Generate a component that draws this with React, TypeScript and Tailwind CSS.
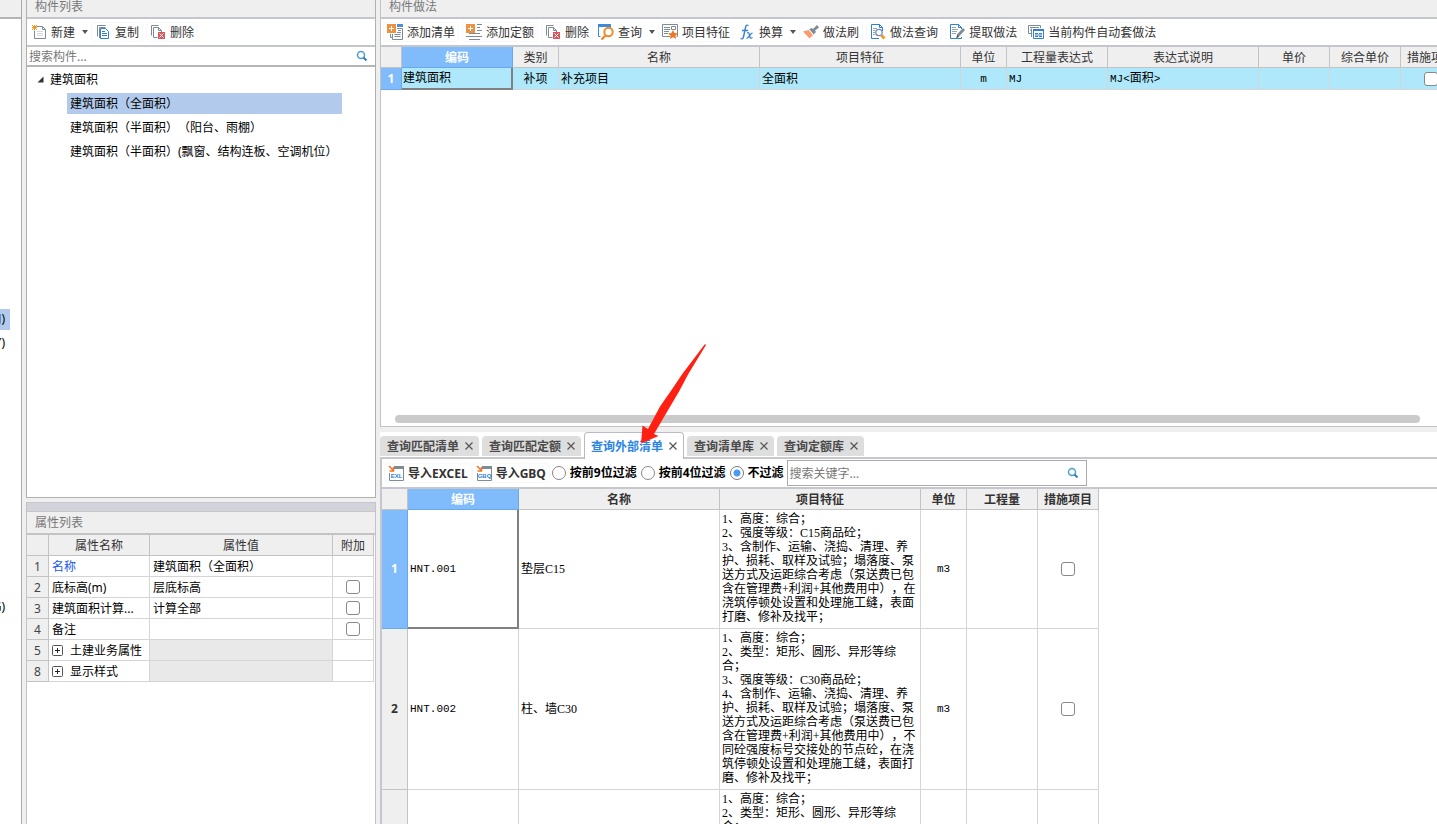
import type { ReactNode } from 'react';
import clsx from 'clsx';

/* ---------- icons ---------- */

function Icon({ children }: { children: ReactNode }) {
  return (
    <svg width="16" height="16" viewBox="0 0 16 16" fill="none" className="shrink-0" aria-hidden="true">
      {children}
    </svg>
  );
}

const NewIcon = () => (
  <Icon>
    <path d="M5.5 2.5h6l3 3v9h-11v-8" stroke="#7d8b94" />
    <path d="M11.5 2.5v3h3" stroke="#7d8b94" />
    <path d="M6 7.5h6M6 9.5h6M6 11.5h6" stroke="#d3d7da" />
    <path d="M1 1h1v1H1zM3 1h1v1H3zM5 1h1v1H5zM2 2h3v1H2zM1 3h5v1H1zM2 4h3v1H2zM1 5h1v1H1zM3 5h1v1H3zM5 5h1v1H5z" fill="#f29a1f" />
  </Icon>
);

const CopyIcon = () => (
  <Icon>
    <path d="M2.5 12.5v-11h8M4.5 14V3.5h6" stroke="#7d8b94" />
    <path d="M5.5 4.5h5l3 3v7h-8z" fill="#fff" stroke="#2f7fd6" />
    <path d="M7 7.5h3M7 9.5h5M7 11.5h5" stroke="#2f7fd6" />
  </Icon>
);

const DeleteIcon = () => (
  <Icon>
    <path d="M1.5 11.5v-10h7M3.5 13.5v-10h5l3 3v1.5M3.5 13.500h4" stroke="#7d8b94" />
    <path d="M8.5 3.5v3h3" stroke="#7d8b94" />
    <path d="M8 8h7v7H8z" fill="#d9575c" />
    <path d="M9.5 9.5l4 4M13.5 9.5l-4 4" stroke="#fff" />
  </Icon>
);

const AddListIcon = () => (
  <Icon>
    <path d="M10 0h6v3h-6z" fill="#4a90d9" />
    <path d="M10 4.5h5.500v11h-10V10M3.5 10v3.5h2" stroke="#7d8b94" />
    <path d="M11 6.5h3M10 8.5h4M7.5 10.5h6M7.5 12.5h6" stroke="#7d8b94" />
    <path d="M0 0h9v9H0z" fill="#ee9140" />
    <path d="M4.5 2v5M2 4.5h5" stroke="#fff" />
  </Icon>
);

const AddQuotaIcon = () => (
  <Icon>
    <path d="M11 .5h5M11 3.5h3M11 6.5h5M3 9.5h11M0 12.5h16M3 15.5h11" stroke="#7d8b94" />
    <path d="M0 0h9v9H0z" fill="#ee9140" />
    <path d="M4.5 2v5M2 4.5h5" stroke="#fff" />
  </Icon>
);

const QueryIcon = () => (
  <Icon>
    <path d="M0 0h13v3H0z" fill="#3f8ad8" />
    <path d="M.5 3v9.5h2M12.5 3v1" stroke="#3f8ad8" />
    <circle cx="10.5" cy="8" r="4.200" fill="#fff" stroke="#f08a2c" strokeWidth="2" />
    <path d="M7.5 11.5L3.5 15.5" stroke="#f08a2c" strokeWidth="2.400" />
  </Icon>
);

const FeatureIcon = () => (
  <Icon>
    <path d="M8 12.5H.5v-12h15v12h-1" stroke="#7d8b94" />
    <path d="M2 3.5h6M2 5.5h6M2 7.5h5M2 9.5h4M9.5 2.5h4v3h-4z" stroke="#7d8b94" />
    <path d="M11 6l1.500 3 3.500.4-2.600 2.300.7 3.300-3.100-1.700L7.900 15l.7-3.300L6 9.400 9.500 9z" fill="#ee7624" />
  </Icon>
);

const FxIcon = () => (
  <Icon>
    <path d="M9.5 1.500C7.500.3 6.800 2 6.400 4L4.600 12.500C4.200 14.700 3 15.300 1.500 14.500M3 6.500h6" stroke="#3a80d2" strokeWidth="1.400" />
    <path d="M8 9c2-1 2 0 2.500 2.500S11.500 15 13.500 13.500M13.500 8.800c-2 0-3.500 5.500-6 5.500" stroke="#3a80d2" strokeWidth="1.300" />
  </Icon>
);

const BrushIcon = () => (
  <Icon>
    <path d="M14 1l2 2.500-4 3 1 1.500-2.500 2.500L6 5.500 8.500 4 10 5z" fill="#7d8b94" />
    <path d="M5.500 6l4.500 5-3.500 3.500L0 7.500z" fill="#fb9a6c" />
    <path d="M6 5.500l4.500 5.200" stroke="#fff" />
  </Icon>
);

const MethodQueryIcon = () => (
  <Icon>
    <path d="M9 14.500H1.500V.5h8l3 3V7" stroke="#2f7fd6" />
    <path d="M9.500.5v3h3" stroke="#2f7fd6" />
    <path d="M3 4.500h4M3 6.500h2M3 8.500h2M3 10.500h2" stroke="#9aa5ac" />
    <circle cx="9" cy="8.500" r="3.200" fill="#fff" stroke="#6b8fc4" strokeWidth="1.300" />
    <path d="M11.500 11.500l3 3" stroke="#f29a1f" strokeWidth="3" />
  </Icon>
);

const ExtractIcon = () => (
  <Icon>
    <path d="M12.500 5V3.500l-3-3h-8v14h11V13" stroke="#2f7fd6" />
    <path d="M9.500.5v3h3" stroke="#2f7fd6" />
    <path d="M3 3.500h4M3 5.500h6M3 7.500h5M3 9.500h4" stroke="#9aa5ac" />
    <path d="M15 5l-6.500 7" stroke="#7d8b94" strokeWidth="2.800" />
    <path d="M8.500 11l-1.500 3 3-1" fill="#444" />
  </Icon>
);

const AutoIcon = () => (
  <Icon>
    <path d="M3 9.500H.5v-8h12V4M3.500 13V4.500" stroke="#7d8b94" />
    <path d="M2 3.500h9M2 6h1" stroke="#7d8b94" />
    <path d="M5.500 5.500h10v9h-10z" fill="#fff" stroke="#2f7fd6" />
    <path d="M5 5h11v2H5z" fill="#2f7fd6" />
    <path d="M7 9.500h3M11 9.500h3M7 12.500h3M11 12.500h3M7 11h7" stroke="#2f7fd6" />
  </Icon>
);

function ImportIcon({ label }: { label: string }) {
  return (
    <Icon>
      <path d="M6 1h10v3H6z" fill="#7d8b94" />
      <path d="M15.500 3v12.500H1.500V8" stroke="#7d8b94" />
      <path d="M1 1l4.500 4.500M5.500 2v4h-4" stroke="#ee7624" strokeWidth="1.500" />
      <text x="8.500" y="13" textAnchor="middle" fontSize="6" fontWeight="700" fontFamily="Liberation Sans, sans-serif" fill="#2f7fd6">
        {label}
      </text>
    </Icon>
  );
}

const SearchIcon = () => (
  <svg width="12" height="12" viewBox="0 0 12 12" fill="none" aria-hidden="true">
    <circle cx="5" cy="5" r="3.500" stroke="#4a9fd0" strokeWidth="1.500" />
    <path d="M7.500 7.500L10.500 10.500" stroke="#2f80b5" strokeWidth="2" />
  </svg>
);

const ExpandIcon = () => (
  <svg width="11" height="11" viewBox="0 0 11 11" fill="none" className="shrink-0" aria-hidden="true">
    <rect x=".5" y=".5" width="10" height="10" rx="1" stroke="#555" />
    <path d="M3 5.500h5M5.500 3v5" stroke="#222" />
  </svg>
);

/* ---------- shared controls ---------- */

function ToolButton({ icon, label, dropdown, bold }: { icon: ReactNode; label: string; dropdown?: boolean; bold?: boolean }) {
  return (
    <button
      type="button"
      className={clsx(
        'flex h-5 shrink-0 items-center gap-1 rounded whitespace-nowrap text-[#333]',
        dropdown ? 'pl-0.5' : 'border border-[#f8f8f8] px-[3px]',
        bold && 'font-bold',
      )}
    >
      {icon}
      <span className="pt-0.5">{label}</span>
      {dropdown && (
        <svg width="9" height="4" viewBox="0 0 9 4" aria-hidden="true">
          <path d="M3 0h6L6 4z" fill="#555" />
        </svg>
      )}
    </button>
  );
}

function Check({ label }: { label: string }) {
  return (
    <input
      type="checkbox"
      aria-label={label}
      className="mx-auto block size-[14px] appearance-none rounded-[3px] border border-[#888] bg-white"
    />
  );
}

function PanelTitle({ children }: { children: ReactNode }) {
  return (
    <h2 className="h-[19px] shrink-0 border-b-2 border-[#c3c6ca] bg-[#efefef] pl-2 leading-[14px] text-[#777]">{children}</h2>
  );
}

const head = 'h-[21px] border-r border-b border-[#c3c3c3] bg-[#efefef] px-0 pt-0.5 pb-0 text-center text-[#333]';
const headActive = 'h-[21px] border-r border-b border-[#6aa8ea] bg-[#80bbfb] px-0 pt-0.5 pb-0 text-center font-bold text-white';
const cell = 'border-r border-b border-[#d5d5d5] px-0.5 py-0';
const cellWide = 'border-r border-b border-[#d5d5d5] px-[3px] py-0';
const mono = "font-['Liberation_Mono','Noto_Sans_CJK_SC',monospace] text-[11px]";
const song = "font-['Liberation_Serif','Noto_Sans_CJK_SC',serif]";

/* ---------- component list ---------- */

const components = ['建筑面积（全面积）', '建筑面积（半面积）（阳台、雨棚）', '建筑面积（半面积）(飘窗、结构连板、空调机位）'];

function ComponentList() {
  return (
    <section className="flex min-h-0 flex-1 flex-col border-x border-b border-[#b0b0b0] bg-white">
      <PanelTitle>构件列表</PanelTitle>
      <div className="flex h-7 shrink-0 items-center gap-[3px] border-b-2 border-[#c3c6ca] pl-0.5">
        <ToolButton icon={<NewIcon />} label="新建" dropdown />
        <ToolButton icon={<CopyIcon />} label="复制" />
        <ToolButton icon={<DeleteIcon />} label="删除" />
      </div>
      <label className="flex h-5 shrink-0 items-center border-b-2 border-[#b5b5b5] pr-[7px] pl-0.5">
        <input type="text" aria-label="搜索构件" placeholder="搜索构件..." className="min-w-0 flex-1 pt-0.5 outline-none placeholder:text-[#777]" />
        <SearchIcon />
      </label>
      <ul>
        <li>
          <div className="flex h-6 items-center gap-1.5 pl-[10px] text-black">
            <svg width="7" height="7" viewBox="0 0 7 7" aria-hidden="true">
              <path d="M6.500 .5v6h-6z" fill="#333" />
            </svg>
            <span className="pt-0.5">建筑面积</span>
          </div>
          <ul>
            {components.map((name, i) => (
              <li key={name} className="flex h-6 items-center pr-[33px] pl-10">
                <span className={clsx('h-[21px] flex-1 pl-[3px] leading-[21px] whitespace-nowrap text-black', i === 0 && 'bg-[#b2cbec]')}>
                  {name}
                </span>
              </li>
            ))}
          </ul>
        </li>
      </ul>
    </section>
  );
}

/* ---------- property list ---------- */

const properties = [
  { no: 1, name: '名称', value: '建筑面积（全面积）', link: true },
  { no: 2, name: '底标高(m)', value: '层底标高', check: true },
  { no: 3, name: '建筑面积计算...', value: '计算全部', check: true },
  { no: 4, name: '备注', value: '', check: true },
  { no: 5, name: '土建业务属性', group: true },
  { no: 8, name: '显示样式', group: true },
];

function PropertyList() {
  return (
    <section className="mt-1 flex h-[322px] shrink-0 flex-col border-x border-[#c3c3c3] bg-white">
      <div className="h-[10px] shrink-0 border-y border-[#c6c7cc] bg-[#d3d4db]" />
      <h2 className="h-[23px] shrink-0 border-b-2 border-[#c3c3c3] bg-[#efefef] pl-2 leading-[21px] text-[#777]">属性列表</h2>
      <table className="w-0 table-fixed border-separate border-spacing-0">
        <thead>
          <tr>
            <th className={clsx(head, 'w-[22px]')} />
            <th className={clsx(head, 'w-[101px] font-normal')}>属性名称</th>
            <th className={clsx(head, 'w-[183px] font-normal')}>属性值</th>
            <th className={clsx(head, 'w-[41px] font-normal')}>附加</th>
          </tr>
        </thead>
        <tbody>
          {properties.map((p) => (
            <tr key={p.no} className="h-[21px] whitespace-nowrap text-black">
              <td className="border-r border-b border-[#c3c3c3] bg-[#efefef] px-0 pt-0.5 pb-0 text-center text-[#444]">{p.no}</td>
              <td className={clsx(cellWide, p.link && 'text-[#1557f0]')}>
                {p.group ? (
                  <button type="button" className="flex items-center gap-[7px]">
                    <ExpandIcon />
                    <span className="pt-0.5">{p.name}</span>
                  </button>
                ) : (
                  <div className="pt-0.5">{p.name}</div>
                )}
              </td>
              <td className={clsx(cellWide, p.group && 'bg-[#e9e9e9]')}>
                <div className="pt-0.5">{p.value}</div>
              </td>
              <td className={cell}>{p.check && <Check label={p.name} />}</td>
            </tr>
          ))}
        </tbody>
      </table>
    </section>
  );
}

/* ---------- method table ---------- */

function MethodPanel() {
  return (
    <section className="flex min-h-0 flex-1 flex-col overflow-hidden border-b border-l border-[#c3c3c3] bg-white">
      <PanelTitle>构件做法</PanelTitle>
      <div className="flex h-7 shrink-0 items-center gap-[3px] border-b-2 border-[#c3c6ca] pl-0.5">
        <ToolButton icon={<AddListIcon />} label="添加清单" />
        <ToolButton icon={<AddQuotaIcon />} label="添加定额" />
        <ToolButton icon={<DeleteIcon />} label="删除" />
        <ToolButton icon={<QueryIcon />} label="查询" dropdown />
        <ToolButton icon={<FeatureIcon />} label="项目特征" />
        <ToolButton icon={<FxIcon />} label="换算" dropdown />
        <ToolButton icon={<BrushIcon />} label="做法刷" />
        <ToolButton icon={<MethodQueryIcon />} label="做法查询" />
        <ToolButton icon={<ExtractIcon />} label="提取做法" />
        <ToolButton icon={<AutoIcon />} label="当前构件自动套做法" />
      </div>
      <div className="min-h-0 flex-1 overflow-hidden">
        <table className="w-0 table-fixed border-separate border-spacing-0 whitespace-nowrap">
          <thead>
            <tr>
              <th className={clsx(head, 'w-[21px]')} />
              <th className={clsx(headActive, 'w-[111px]')}>编码</th>
              <th className={clsx(head, 'w-[46px] font-normal')}>类别</th>
              <th className={clsx(head, 'w-[201px] font-normal')}>名称</th>
              <th className={clsx(head, 'w-[201px] font-normal')}>项目特征</th>
              <th className={clsx(head, 'w-[46px] font-normal')}>单位</th>
              <th className={clsx(head, 'w-[101px] font-normal')}>工程量表达式</th>
              <th className={clsx(head, 'w-[151px] font-normal')}>表达式说明</th>
              <th className={clsx(head, 'w-[71px] font-normal')}>单价</th>
              <th className={clsx(head, 'w-[71px] font-normal')}>综合单价</th>
              <th className={clsx(head, 'w-[61px] font-normal')}>措施项目</th>
            </tr>
          </thead>
          <tbody>
            <tr className={clsx('h-[22px] bg-[#aee8fa] text-black', song)}>
              <td className="border-r border-b border-[#6aa8ea] bg-[#80bbfb] p-0 text-center font-['Noto_Sans',sans-serif] font-bold text-white">1</td>
              <td className="border-r-2 border-b-2 border-[#808080] px-px py-0">建筑面积</td>
              <td className={clsx(cell, 'text-center')}>补项</td>
              <td className={cell}>补充项目</td>
              <td className={cell}>全面积</td>
              <td className={clsx(cell, mono, 'text-center')}>m</td>
              <td className={clsx(cell, mono)}>MJ</td>
              <td className={cell}>
                <span className={mono}>MJ&lt;</span>面积<span className={mono}>&gt;</span>
              </td>
              <td className={cell} />
              <td className={cell} />
              <td className={cell}>
                <Check label="措施项目" />
              </td>
            </tr>
          </tbody>
        </table>
      </div>
      <div className="mr-[17px] mb-[3px] ml-[14px] h-2 shrink-0 rounded-full bg-[#cacaca]" />
    </section>
  );
}

/* ---------- query dock ---------- */

const tabs = ['查询匹配清单', '查询匹配定额', '查询外部清单', '查询清单库', '查询定额库'];
const filters = ['按前9位过滤', '按前4位过滤', '不过滤'];

const bills = [
  {
    no: 1,
    code: 'HNT.001',
    name: '垫层C15',
    unit: 'm3',
    feature: `1、高度：综合；
2、强度等级：C15商品砼；
3、含制作、运输、浇捣、清理、养
护、损耗、取样及试验；塌落度、泵
送方式及运距综合考虑（泵送费已包
含在管理费+利润+其他费用中），在
浇筑停顿处设置和处理施工缝，表面
打磨、修补及找平；`,
  },
  {
    no: 2,
    code: 'HNT.002',
    name: '柱、墙C30',
    unit: 'm3',
    feature: `1、高度：综合；
2、类型：矩形、圆形、异形等综
合；
3、强度等级：C30商品砼；
4、含制作、运输、浇捣、清理、养
护、损耗、取样及试验；塌落度、泵
送方式及运距综合考虑（泵送费已包
含在管理费+利润+其他费用中），不
同砼强度标号交接处的节点砼，在浇
筑停顿处设置和处理施工缝，表面打
磨、修补及找平；`,
  },
  {
    no: 3,
    feature: `1、高度：综合；
2、类型：矩形、圆形、异形等综
合；`,
  },
];

function QueryDock() {
  return (
    <section className="mt-[5px] flex h-[392px] shrink-0 flex-col bg-white">
      <div role="tablist" className="flex h-[27px] shrink-0 items-end gap-[3px] border-b-2 border-[#c5c7cc]">
        {tabs.map((tab) => {
          const active = tab === '查询外部清单';
          return (
            <div
              key={tab}
              className={clsx(
                'flex shrink-0 items-center gap-1.5 rounded-t font-bold',
                active
                  ? '-mb-0.5 h-[27px] border border-b-0 border-[#b9bcc8] bg-white px-1.5 text-[#2b84e8]'
                  : 'mb-px h-5 bg-[#dedede] pr-1.5 pl-[7px] text-[#4a4a4a]',
              )}
            >
              <button type="button" role="tab" aria-selected={active} className="pt-0.5">
                {tab}
              </button>
              <button type="button" aria-label={`关闭${tab}`}>
                <svg width="8" height="8" viewBox="0 0 8 8" fill="none" aria-hidden="true">
                  <path d="M.5 .5l7 7M7.500 .5l-7 7" stroke="#555" strokeWidth="1.200" />
                </svg>
              </button>
            </div>
          );
        })}
      </div>
      <div className="flex min-h-0 flex-1 flex-col overflow-hidden border-l-2 border-[#c5c7cc]">
        <div className="flex h-[30px] shrink-0 items-center border-b-2 border-[#c5c7cc] pl-0.5">
          <ToolButton icon={<ImportIcon label="EXL" />} label="导入EXCEL" bold />
          <ToolButton icon={<ImportIcon label="GBQ" />} label="导入GBQ" bold />
          <div className="ml-0.5 flex items-center gap-1">
            {filters.map((f) => (
              <label key={f} className="flex items-center gap-1 font-bold whitespace-nowrap text-black">
                <input
                  type="radio"
                  name="filter"
                  defaultChecked={f === '不过滤'}
                  className="size-[14px] appearance-none rounded-full border border-[#888] bg-white checked:border-[#777] checked:bg-[radial-gradient(circle,#4a9af5_3px,#fff_4px)]"
                />
                {f}
              </label>
            ))}
          </div>
          <label className="ml-[3px] flex h-[26px] w-[300px] items-center border border-[#aaa] pr-[7px] pl-0.5">
            <input type="text" aria-label="搜索关键字" placeholder="搜索关键字..." className="min-w-0 flex-1 pt-0.5 outline-none placeholder:text-[#777]" />
            <SearchIcon />
          </label>
        </div>
        <table className="w-0 table-fixed border-separate border-spacing-0 whitespace-nowrap">
          <thead>
            <tr>
              <th className={clsx(head, 'w-[26px]')} />
              <th className={clsx(headActive, 'w-[111px]')}>编码</th>
              <th className={clsx(head, 'w-[201px]')}>名称</th>
              <th className={clsx(head, 'w-[201px]')}>项目特征</th>
              <th className={clsx(head, 'w-[46px]')}>单位</th>
              <th className={clsx(head, 'w-[71px]')}>工程量</th>
              <th className={clsx(head, 'w-[61px]')}>措施项目</th>
            </tr>
          </thead>
          <tbody>
            {bills.map((b, i) => (
              <tr key={b.no} className={clsx('text-black', song)}>
                <td
                  className={clsx(
                    "border-r border-b p-0 text-center font-['Noto_Sans',sans-serif] font-bold",
                    i === 0 ? 'border-[#6aa8ea] bg-[#80bbfb] text-white' : 'border-[#c3c3c3] bg-[#efefef] text-[#333]',
                  )}
                >
                  {b.code && b.no}
                </td>
                <td className={clsx(mono, i === 0 ? 'border-r-2 border-b-2 border-[#808080] px-0.5 py-0' : cell)}>{b.code}</td>
                <td className={cell}>{b.name}</td>
                <td className="border-r border-b border-[#d5d5d5] px-0.5 pt-0.5 pb-1 leading-[14px] whitespace-pre">{b.feature}</td>
                <td className={clsx(cell, mono, 'text-center')}>{b.unit}</td>
                <td className={cell} />
                <td className={cell}>{b.code && <Check label={`措施项目 ${b.code}`} />}</td>
              </tr>
            ))}
          </tbody>
        </table>
      </div>
    </section>
  );
}

/* Right edge of the navigation tree, the rest is scrolled out to the left */
const navRows = Array.from({ length: 25 }, (_, i) => ({ 12: 'J)', 13: 'Y)', 24: 'G)' })[i] ?? '');

export default function App() {
  return (
    <div className="relative flex h-screen overflow-hidden bg-[#efefef] font-['Noto_Sans','Noto_Sans_CJK_SC',sans-serif] text-[12px] leading-4 [text-spacing-trim:space-all]">
      <nav className="flex w-[22px] shrink-0 flex-col overflow-hidden border-r border-[#aaa] bg-white">
        <div className="h-[19px] shrink-0 border-b-2 border-[#b5b5b5] bg-[#efefef]" />
        <ul>
          {navRows.map((text, i) => (
            <li key={i} className="flex h-6 items-center">
              <span className={clsx('flex h-[21px] w-[10px] items-center justify-end overflow-hidden pr-[5px] text-black', i === 12 && 'bg-[#b2cbec]')}>
                {text}
              </span>
            </li>
          ))}
        </ul>
      </nav>
      <aside className="mx-1 flex w-[350px] shrink-0 flex-col">
        <ComponentList />
        <PropertyList />
      </aside>
      <main className="flex min-w-0 flex-1 flex-col">
        <MethodPanel />
        <QueryDock />
      </main>
      <svg
        width="66"
        height="101"
        viewBox="0 0 66 101"
        className="pointer-events-none absolute top-[343px] left-[641px]"
        aria-hidden="true"
      >
        <path d="M64 1L65 2L47.300 31L38.300 48L28.300 65L13 91L17.500 93L0 100.500L1.500 82.500L7 86L19 63.500L30.500 47L42 30Z" fill="#ff2013" />
      </svg>
    </div>
  );
}
